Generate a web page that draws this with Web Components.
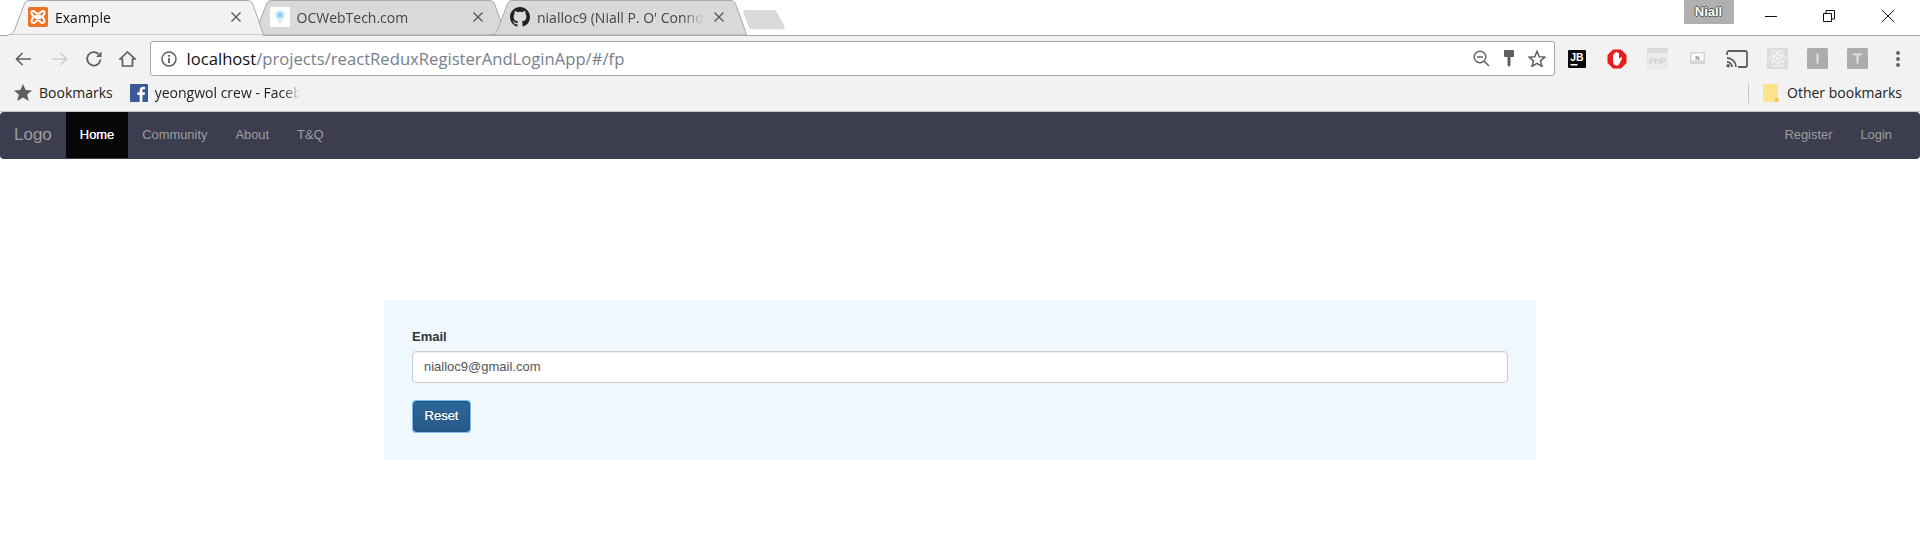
<!DOCTYPE html>
<html>
<head>
<meta charset="utf-8">
<title>Example</title>
<style>
    html, body { margin: 0; padding: 0; background: #fff; }
    body { width: 1920px; height: 553px; overflow: hidden; font-family: "Liberation Sans", Arial, sans-serif; }
</style>
</head>
<body>
<browser-frame></browser-frame>
<app-navbar></app-navbar>
<reset-page></reset-page>

<script>
const FONT_UI = `"Open Sans", "Noto Sans", sans-serif`;

class BrowserTab extends HTMLElement {
    connectedCallback() {
        const active = this.hasAttribute('active');
        const fill = active ? '#f2f2f2' : '#d9d9d9';
        this.attachShadow({mode: 'open'});
        this.shadowRoot.innerHTML = `
            <style>
                :host {
                    display: block;
                    position: relative;
                    width: 257px;
                    height: 36px;
                    margin-right: -15.5px;
                    z-index: ${active ? 2 : 1};
                }
                svg.shape { position: absolute; left: 0; top: 0; }
                .inner {
                    position: relative;
                    display: flex;
                    align-items: center;
                    height: 36px;
                    padding: 0 23px 0 ${this.getAttribute('pad-left') || 21}px;
                    box-sizing: border-box;
                    font: 14px ${FONT_UI};
                    color: ${active ? '#111' : '#444'};
                }
                .icon { width: 20px; height: 20px; flex: none; margin-right: 7px; margin-top: -2px; }
                .title {
                    flex: 1;
                    white-space: nowrap;
                    overflow: hidden;
                    margin-top: -2px;
                    -webkit-mask-image: linear-gradient(to left, transparent 0, #000 22px);
                }
                .close { flex: none; width: 10px; height: 10px; margin-left: 10px; margin-top: -2px; }
            </style>
            <svg class="shape" width="257" height="36" viewBox="0 0 257 36">
                <path d="M0.5 35 C5 35 6 33 7.5 30 L17 5 C18 2 19.5 0.5 23 0.5 L240 0.5 C243.5 0.5 245 2 246 5 L255 30 C256 33 256.5 35 257 35 Z" fill="${fill}" stroke="#a9a9a9"/>
                ${active ? '<rect x="1" y="35" width="255" height="1" fill="#f2f2f2"/>' : ''}
            </svg>
            <div class="inner">
                <span class="icon"><slot name="icon"></slot></span>
                <span class="title"><slot></slot></span>
                <svg class="close" viewBox="0 0 10 10"><path d="M0.5 0.5 L9.5 9.5 M9.5 0.5 L0.5 9.5" stroke="#555" stroke-width="1.3"/></svg>
            </div>
        `;
    }
}
customElements.define('browser-tab', BrowserTab);

class ToolIcon extends HTMLElement {
    connectedCallback() {
        this.attachShadow({mode: 'open'});
        this.shadowRoot.innerHTML = `
            <style>
                :host {
                    display: flex;
                    align-items: center;
                    justify-content: center;
                    flex: none;
                    width: ${this.getAttribute('w') || 40}px;
                    height: 34px;
                }
                ::slotted(svg) { display: block; }
            </style>
            <slot></slot>
        `;
    }
}
customElements.define('tool-icon', ToolIcon);

class BrowserFrame extends HTMLElement {
    constructor() {
        super();
        this.attachShadow({mode: 'open'});
    }

    connectedCallback() {
        this.shadowRoot.innerHTML = `
            <style>
                :host { display: block; font-family: ${FONT_UI}; }
                #strip {
                    position: relative;
                    display: flex;
                    height: 36px;
                    padding-left: 7px;
                    background: #fff;
                    box-sizing: border-box;
                }
                #strip::after {
                    content: "";
                    position: absolute;
                    left: 0; right: 0; top: 35px;
                    height: 1px;
                    background: #a9a9a9;
                }
                #newtab { margin: 9px 0 0 11.5px; flex: none; position: relative; z-index: 1; }
                #window { margin-left: auto; margin-right: 3px; display: flex; height: 24px; position: relative; z-index: 1; }
                #user {
                    width: 50px;
                    height: 24px;
                    margin-right: 8px;
                    background: #b0b0b0;
                    color: #fff;
                    font: bold 13px "Liberation Sans", sans-serif;
                    line-height: 23px;
                    text-align: center;
                    text-shadow: -1px 0 #555, 1px 0 #555, 0 -1px #555, 0 1px #555;
                }
                .win { width: 58.5px; height: 32px; display: flex; align-items: center; justify-content: center; }
                #toolbar {
                    display: flex;
                    align-items: center;
                    height: 40px;
                    padding: 5px 0 0 3px;
                    box-sizing: border-box;
                    background: #f2f2f2;
                }
                #omnibox {
                    flex: none;
                    display: flex;
                    align-items: center;
                    width: 1405px;
                    height: 35px;
                    margin-left: 6px;
                    box-sizing: border-box;
                    background: #fff;
                    border: 1px solid #a9a9a9;
                    border-radius: 3px;
                }
                #info { margin: 0 10px 0 10px; flex: none; }
                #url { flex: 1; font-size: 16.65px; color: #76808c; white-space: nowrap; margin-left: -0.5px; }
                #url b { font-weight: 400; color: #111; }
                #actions { display: flex; align-items: center; margin-right: 4px; }
                #extensions { display: flex; margin-left: 2px; }
                #bookmarks {
                    display: flex;
                    align-items: center;
                    height: 36px;
                    box-sizing: border-box;
                    padding: 1px 0 3px 14px;
                    background: #f2f2f2;
                    border-bottom: 1px solid #c2c2c2;
                    font-size: 14px;
                    color: #222;
                }
                #bookmarks .gap { margin-left: 7px; }
                #fb { margin-left: 17px; flex: none; }
                #fbtext {
                    width: 145px;
                    margin-left: 7px;
                    white-space: nowrap;
                    overflow: hidden;
                    -webkit-mask-image: linear-gradient(to left, transparent 0, #000 16px);
                }
                #other { margin-left: auto; display: flex; align-items: center; padding-right: 18px; }
                #divider { width: 1px; height: 20px; background: #c8c8c8; margin-right: 14px; }
            </style>

            <div id="strip">
                <browser-tab active>
                    <svg slot="icon" width="20" height="20" viewBox="0 0 20 20">
                        <rect width="20" height="20" rx="2" fill="#ea7125"/>
                        <path d="M5 4 C3 4 3 7 4.5 8 L6 9.5 L4.5 11.5 C3 13 3.5 16 5.5 16 C7 16 8 14.5 9 13.5 L11 13.5 C12 14.5 13 16 14.5 16 C16.500 16 17 13 15.500 11.500 L14 9.500 L15.500 8 C17 7 17 4 15 4 C13.500 4 12.500 5.500 11.500 6.500 L8.500 6.500 C7.500 5.500 6.500 4 5 4 Z M8 9 L12 9 L12 11 L8 11 Z" fill="none" stroke="#fff" stroke-width="2.100"/>
                    </svg>
                    Example
                </browser-tab>
                <browser-tab>
                    <svg slot="icon" width="20" height="20" viewBox="0 0 20 20">
                        <rect width="20" height="20" fill="#fff"/>
                        <circle cx="10" cy="8" r="4.500" fill="#bfe3f8"/>
                        <circle cx="10" cy="8" r="2.200" fill="#8ccbf0"/>
                        <path d="M8 13 L12 13 L10 16 Z" fill="#bfe3f8"/>
                    </svg>
                    OCWebTech.com
                </browser-tab>
                <browser-tab pad-left="20">
                    <svg slot="icon" width="20" height="20" viewBox="0 0 16 16">
                        <path fill="#222" d="M8 0C3.58 0 0 3.58 0 8c0 3.54 2.29 6.53 5.47 7.59.4.07.55-.17.55-.38 0-.19-.01-.82-.01-1.490-2.010.370-2.530-.490-2.690-.940-.090-.230-.480-.940-.820-1.130-.280-.150-.680-.520-.010-.530.630-.010 1.080.580 1.230.820.720 1.210 1.870.870 2.330.660.070-.520.280-.870.510-1.070-1.780-.200-3.640-.890-3.640-3.950 0-.870.310-1.590.820-2.150-.080-.200-.360-1.020.080-2.120 0 0 .670-.210 2.200.820.640-.180 1.320-.270 2-.270s1.360.090 2 .270c1.530-1.040 2.200-.820 2.200-.820.440 1.100.160 1.920.080 2.120.510.560.820 1.270.820 2.150 0 3.070-1.870 3.750-3.650 3.950.290.250.540.730.540 1.480 0 1.070-.010 1.930-.010 2.200 0 .210.150.460.550.380A8.013 8.013 0 0 0 16 8c0-4.420-3.580-8-8-8z"/>
                    </svg>
                    nialloc9 (Niall P. O' Connor)
                </browser-tab>
                <svg id="newtab" width="43" height="21" viewBox="0 0 43 21">
                    <path d="M2 1.500 L30 1.500 C32 1.500 33 2 34 4 L41 17 C42 19 41 20 39 20 L10 20 C8 20 7 19.500 6 18 L1 4 C0.500 2.500 1 1.500 2 1.500 Z" fill="#d9d9d9" stroke="#dcdcdc"/>
                </svg>
                <div id="window">
                    <div id="user">Niall</div>
                    <div class="win"><svg width="12" height="12" viewBox="0 0 12 12"><path d="M0 6.500 H12" stroke="#111"/></svg></div>
                    <div class="win"><svg width="12" height="12" viewBox="0 0 12 12"><path d="M0.500 3.500 H8.500 V11.500 H0.500 Z M3 3.500 V0.500 H11.500 V9 H8.500" fill="none" stroke="#111"/></svg></div>
                    <div class="win"><svg width="12" height="12" viewBox="0 0 12 12"><path d="M0 0 L12 12 M12 0 L0 12" stroke="#111"/></svg></div>
                </div>
            </div>

            <div id="toolbar">
                <tool-icon w="40"><svg width="16" height="14" viewBox="0 0 16 14"><path d="M16 7 H1.500 M7.500 1 L1.500 7 L7.500 13" fill="none" stroke="#5f5f5f" stroke-width="1.700"/></svg></tool-icon>
                <tool-icon w="34"><svg width="16" height="14" viewBox="0 0 16 14"><path d="M0 7 H14.500 M8.500 1 L14.500 7 L8.500 13" fill="none" stroke="#cfcfcf" stroke-width="1.700"/></svg></tool-icon>
                <tool-icon w="33"><svg width="18" height="18" viewBox="0 0 18 18"><path d="M15.500 9.500 A6.700 6.700 0 1 1 13.500 4" fill="none" stroke="#5f5f5f" stroke-width="1.800"/><path d="M16.500 1.500 V7 H11 Z" fill="#5f5f5f"/></svg></tool-icon>
                <tool-icon w="34"><svg width="17" height="16" viewBox="0 0 17 16"><path d="M1 8 L8.500 1 L16 8 H13.500 V15 H3.500 V8 Z" fill="none" stroke="#5f5f5f" stroke-width="1.700"/></svg></tool-icon>
                <div id="omnibox">
                    <svg id="info" width="16" height="16" viewBox="0 0 16 16"><circle cx="8" cy="8" r="7" fill="none" stroke="#5f5f5f" stroke-width="1.500"/><rect x="7.100" y="7" width="1.800" height="5" fill="#5f5f5f"/><rect x="7.100" y="4" width="1.800" height="1.800" fill="#5f5f5f"/></svg>
                    <span id="url"><b>localhost</b>/projects/reactReduxRegisterAndLoginApp/#/fp</span>
                    <div id="actions">
                        <tool-icon w="28"><svg width="17" height="17" viewBox="0 0 17 17"><circle cx="7" cy="7" r="5.800" fill="none" stroke="#5f5f5f" stroke-width="1.400"/><path d="M4 7 H10 M11 11 L16 16" stroke="#5f5f5f" stroke-width="1.500"/></svg></tool-icon>
                        <tool-icon w="28"><svg width="10" height="17" viewBox="0 0 10 17"><path d="M1 0 H9 C9.500 0 10 .5 10 1 V6 C10 6.500 9.500 7 9 7 H6.500 V15 L5 17 L3.500 15 V7 H1 C.5 7 0 6.500 0 6 V1 C0 .5 .5 0 1 0 Z" fill="#5f5f5f"/></svg></tool-icon>
                        <tool-icon w="27"><svg width="18" height="17" viewBox="0 0 18 17"><path d="M9 1.300 L11.200 6.700 L17 7.100 L12.500 10.800 L14 16.400 L9 13.300 L4 16.400 L5.500 10.800 L1 7.100 L6.800 6.700 Z" fill="none" stroke="#5f5f5f" stroke-width="1.500"/></svg></tool-icon>
                    </div>
                </div>
                <div id="extensions">
                    <tool-icon w="40"><svg width="18" height="18" viewBox="0 0 18 18"><rect width="18" height="18" rx="1" fill="#0a0a0a"/><text x="9" y="10.500" text-anchor="middle" font-family="Liberation Sans" font-weight="bold" font-size="10.500" fill="#fff">JB</text><rect x="2.500" y="14" width="7" height="1.500" fill="#fff"/></svg></tool-icon>
                    <tool-icon w="40"><svg width="20" height="20" viewBox="0 0 20 20"><path d="M6 0.500 H14 L19.500 6 V14 L14 19.500 H6 L0.500 14 V6 Z" fill="#e81c1c"/><path d="M6 11 V6 C6 5 7.500 5 7.500 6 V4 C7.500 3 9 3 9 4 V3.500 C9 2.500 10.500 2.500 10.500 3.500 V4.500 C10.500 3.500 12 3.500 12 4.500 V10 L13.500 8.500 C14.500 7.800 15.500 8.800 14.800 9.800 L12.500 14.500 C12 16 11 16.500 9.500 16.500 C7 16.500 6 14.500 6 12 Z" fill="#fff"/></svg></tool-icon>
                    <tool-icon w="40"><svg width="21" height="21" viewBox="0 0 21 21"><rect width="21" height="21" fill="#ececec" stroke="#dedede"/><rect width="21" height="5" fill="#dcdcdc"/><text x="10.500" y="15.500" text-anchor="middle" font-family="Liberation Sans" font-weight="bold" font-size="8.500" fill="#d0d0d0">PHP</text></svg></tool-icon>
                    <tool-icon w="40"><svg width="15" height="13" viewBox="0 0 15 13"><rect width="15" height="12" fill="#d4d4d4"/><rect x="1.500" y="1.500" width="12" height="7" fill="#fbfbfb"/><text x="7.500" y="7.500" text-anchor="middle" font-family="Liberation Sans" font-weight="bold" font-size="6" fill="#888">N</text></svg></tool-icon>
                    <tool-icon w="40"><svg width="22" height="18" viewBox="0 0 22 18"><path d="M1 5 V3 C1 2 2 1 3 1 H19 C20 1 21 2 21 3 V15 C21 16 20 17 19 17 H12" fill="none" stroke="#5f5f5f" stroke-width="1.800"/><path d="M1 8 A9 9 0 0 1 10 17 M1 12 A5 5 0 0 1 6 17" fill="none" stroke="#5f5f5f" stroke-width="1.800"/><circle cx="2.200" cy="15.800" r="1.800" fill="#5f5f5f"/></svg></tool-icon>
                    <tool-icon w="40"><svg width="21" height="21" viewBox="0 0 21 21"><rect width="21" height="21" fill="#dcdcdc"/><g fill="none" stroke="#f4f4f4" stroke-width="1"><ellipse cx="10.500" cy="10.500" rx="9" ry="3.500"/><ellipse cx="10.500" cy="10.500" rx="9" ry="3.500" transform="rotate(60 10.500 10.500)"/><ellipse cx="10.500" cy="10.500" rx="9" ry="3.500" transform="rotate(120 10.500 10.500)"/></g><circle cx="10.500" cy="10.500" r="1.800" fill="#f4f4f4"/></svg></tool-icon>
                    <tool-icon w="40"><svg width="21" height="21" viewBox="0 0 21 21"><rect width="21" height="21" rx="1.500" fill="#acacac"/><rect x="9.500" y="5.500" width="2" height="10" fill="#e4e4e4"/></svg></tool-icon>
                    <tool-icon w="40"><svg width="21" height="21" viewBox="0 0 21 21"><rect width="21" height="21" rx="1.500" fill="#acacac"/><path d="M6 5.500 H15 V7.300 H11.500 V15.500 H9.500 V7.300 H6 Z" fill="#e4e4e4"/></svg></tool-icon>
                    <tool-icon w="41"><svg width="4" height="16" viewBox="0 0 4 16"><circle cx="2" cy="2" r="1.900" fill="#5f5f5f"/><circle cx="2" cy="8" r="1.900" fill="#5f5f5f"/><circle cx="2" cy="14" r="1.900" fill="#5f5f5f"/></svg></tool-icon>
                </div>
            </div>

            <div id="bookmarks">
                <svg width="18" height="17" viewBox="0 0 18 17"><path d="M9 0 L11.600 6 L18 6.500 L13.200 10.600 L14.700 17 L9 13.600 L3.300 17 L4.800 10.600 L0 6.500 L6.400 6 Z" fill="#5f5f5f"/></svg>
                <span class="gap">Bookmarks</span>
                <svg id="fb" width="18" height="18" viewBox="0 0 18 18"><rect width="18" height="18" rx="1" fill="#3b5998"/><path d="M12.400 18 V11 H14.700 L15 8.300 H12.400 V6.600 C12.400 5.800 12.700 5.300 13.800 5.300 H15.100 V2.900 C14.800 2.900 14 2.800 13.100 2.800 C11.100 2.800 9.700 4 9.700 6.300 V8.300 H7.400 V11 H9.700 V18 Z" fill="#fff"/></svg>
                <div id="fbtext">yeongwol crew - Facebook</div>
                <div id="other">
                    <div id="divider"></div>
                    <svg width="16" height="18" viewBox="0 0 16 18"><path d="M1.500 0 H12.500 C14 0 15 1 15 2.500 V18 H1.500 C.5 18 0 17.500 0 16.500 V1.500 C0 .5 .5 0 1.500 0 Z" fill="#fde28c"/><path d="M12 14 H15.500 V18 H12 Z" fill="#f0c850"/></svg>
                    <span class="gap" style="margin-left:8px">Other bookmarks</span>
                </div>
            </div>
        `;
    }
}
customElements.define('browser-frame', BrowserFrame);

class NavLink extends HTMLElement {
    connectedCallback() {
        this.attachShadow({mode: 'open'});
        this.shadowRoot.innerHTML = `
            <style>
                :host {
                    display: block;
                    padding: 0 14px;
                    line-height: 46px;
                    height: 46px;
                    font-size: 12.9px;
                    color: #9d9d9d;
                }
                :host([active]) {
                    background: #080808;
                    color: #fff;
                    text-shadow: 0 0 .4px #fff;
                }
            </style>
            <slot></slot>
        `;
    }
}
customElements.define('nav-link', NavLink);

class AppNavbar extends HTMLElement {
    constructor() {
        super();
        this.attachShadow({mode: 'open'});
    }

    connectedCallback() {
        this.shadowRoot.innerHTML = `
            <style>
                :host {
                    display: flex;
                    height: 47px;
                    box-sizing: border-box;
                    padding-bottom: 1px;
                    background: #3c3d4f;
                    border-radius: 4px;
                    font-family: "Liberation Sans", Arial, sans-serif;
                }
                #brand {
                    padding: 0 14px;
                    line-height: 46px;
                    font-size: 17px;
                    color: #9d9d9d;
                }
                #right { margin-left: auto; display: flex; margin-right: 14px; }
            </style>
            <div id="brand">Logo</div>
            <nav-link active>Home</nav-link>
            <nav-link>Community</nav-link>
            <nav-link>About</nav-link>
            <nav-link>T&amp;Q</nav-link>
            <div id="right">
                <nav-link>Register</nav-link>
                <nav-link>Login</nav-link>
            </div>
        `;
    }
}
customElements.define('app-navbar', AppNavbar);

class ResetPage extends HTMLElement {
    constructor() {
        super();
        this.attachShadow({mode: 'open'});
    }

    connectedCallback() {
        this.shadowRoot.innerHTML = `
            <style>
                :host {
                    display: block;
                    padding: 141px 384px 0;
                    font-family: "Liberation Sans", Arial, sans-serif;
                }
                form {
                    display: flex;
                    flex-direction: column;
                    align-items: flex-start;
                    height: 160px;
                    box-sizing: border-box;
                    padding: 28px;
                    background: #eff7ff;
                }
                label {
                    font-size: 13px;
                    font-weight: bold;
                    line-height: 18px;
                    color: #333;
                    margin-bottom: 5px;
                }
                input {
                    display: block;
                    width: 100%;
                    height: 32px;
                    box-sizing: border-box;
                    padding: 0 11px 1px;
                    font: 13px "Liberation Sans", Arial, sans-serif;
                    color: #555;
                    background: #fff;
                    border: 1px solid #ccc;
                    border-radius: 4px;
                    box-shadow: inset 0 1px 1px rgba(0,0,0,.075);
                    outline: none;
                }
                button {
                    margin: 18px 0 0 1px;
                    width: 57px;
                    height: 31px;
                    padding: 0 0 2px;
                    box-sizing: border-box;
                    font: 13px "Liberation Sans", Arial, sans-serif;
                    text-shadow: 0 -1px 0 rgba(0,0,0,.2), 0 0 .3px #fff;
                    color: #fff;
                    background: linear-gradient(to bottom, #2b6699 0%, #265a88 100%);
                    border: 1px solid #245580;
                    border-radius: 3px;
                    box-shadow: 0 0 0 1px rgba(102,175,233,.8);
                }
            </style>
            <form onsubmit="return false">
                <label>Email</label>
                <input type="text" value="nialloc9@gmail.com">
                <button>Reset</button>
            </form>
        `;
    }
}
customElements.define('reset-page', ResetPage);
</script>
</body>
</html>
